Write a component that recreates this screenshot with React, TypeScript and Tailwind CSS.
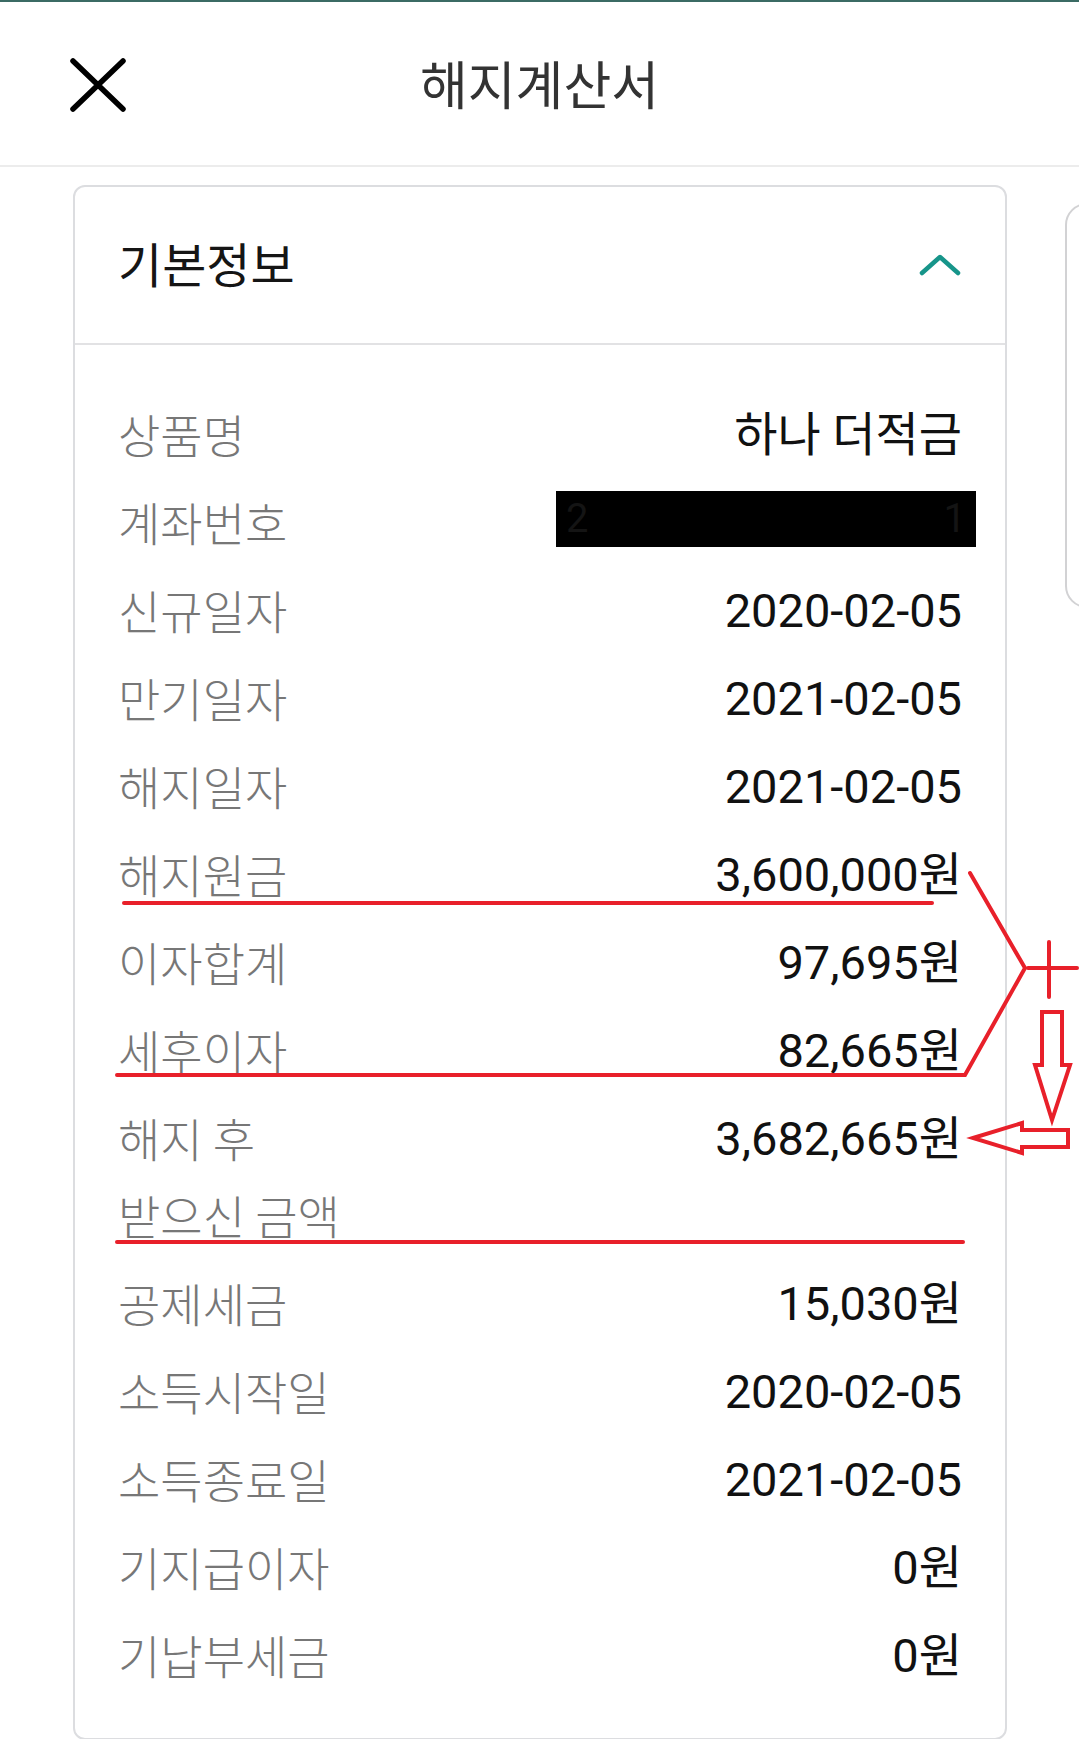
import React from 'react'

const KR = "font-['Noto_Sans_CJK_KR','Noto_Sans',sans-serif]"
const NUM = "font-['Roboto','Noto_Sans_CJK_KR',sans-serif]"

type Row = { label: string[]; value: string | null }

const rows: Row[] = [
  { label: ['상품명'], value: '하나 더적금' },
  { label: ['계좌번호'], value: null },
  { label: ['신규일자'], value: '2020-02-05' },
  { label: ['만기일자'], value: '2021-02-05' },
  { label: ['해지일자'], value: '2021-02-05' },
  { label: ['해지원금'], value: '3,600,000원' },
  { label: ['이자합계'], value: '97,695원' },
  { label: ['세후이자'], value: '82,665원' },
  { label: ['해지 후', '받으신 금액'], value: '3,682,665원' },
  { label: ['공제세금'], value: '15,030원' },
  { label: ['소득시작일'], value: '2020-02-05' },
  { label: ['소득종료일'], value: '2021-02-05' },
  { label: ['기지급이자'], value: '0원' },
  { label: ['기납부세금'], value: '0원' },
]

function CloseIcon() {
  return (
    <svg width="56" height="56" viewBox="0 0 56 56" className="block">
      <path d="M3 4 L53 52 M53 4 L3 52" stroke="#000" strokeWidth="5.5" strokeLinecap="round" fill="none" />
    </svg>
  )
}

function Chevron() {
  return (
    <svg width="44" height="24" viewBox="0 0 44 24" className="block">
      <polyline points="4,20 22,4 40,20" stroke="#17958a" strokeWidth="4.5" strokeLinecap="round" strokeLinejoin="round" fill="none" />
    </svg>
  )
}

// red hand-drawn marks that sit on top of the screenshot
function Annotations() {
  const red = '#e8202a'
  return (
    <svg className="absolute left-0 top-0 pointer-events-none" width="1079" height="1739" viewBox="0 0 1079 1739">
      <g stroke={red} strokeWidth="4" fill="none" strokeLinecap="round" strokeLinejoin="miter">
        <line x1="124" y1="903" x2="932" y2="903" />
        <polyline points="117,1075 965,1075 1025,968 970,873" />
        <line x1="1028" y1="968" x2="1077" y2="968" />
        <line x1="1049" y1="942" x2="1049" y2="997" />
        <polygon points="1042,1012 1062,1012 1062,1065 1070,1065 1052,1120 1035,1065 1042,1065" />
        <polygon points="973,1138 1022,1123 1022,1130 1068,1130 1068,1147 1022,1147 1022,1153" />
        <line x1="117" y1="1242" x2="963" y2="1242" />
      </g>
    </svg>
  )
}

export default function App() {
  return (
    <div className="relative w-[1079px] h-[1739px] overflow-hidden bg-white">
      <div className="h-[2px] bg-[#3b6b64]" />
      <header className="grid grid-cols-[1fr_auto_1fr] items-center h-[165px] border-b-2 border-[#ececec]">
        <div className="pl-[70px] pt-[2px]">
          <CloseIcon />
        </div>
        <h1 className={`${KR} text-[52px] leading-none text-[#333] -mt-[2px]`}>해지계산서</h1>
        <div />
      </header>

      <div className="flex items-start gap-[58px] pl-[73px] pt-[18px]">
        <section className="w-[934px] shrink-0 rounded-[12px] border-2 border-[#dcdde0]">
          <div className="flex items-center justify-between h-[158px] pl-[43px] pr-[43px] border-b-2 border-[#e2e2e4]">
            <h2 className={`${KR} text-[48px] leading-none text-[#151515] -mt-[6px]`}>기본정보</h2>
            <Chevron />
          </div>

          <div className="pt-[44px] pb-[40px] pl-[43px] pr-[43px]">
            {rows.map((row, i) => (
              <div key={i} className="flex items-start justify-between py-[5.5px]">
                <div className={`${KR} font-light text-[46px] leading-[77px] text-[#777]`}>
                  {row.label.map((l, j) => (
                    <div key={j}>{l}</div>
                  ))}
                </div>
                {row.value === null ? (
                  <div className="mt-[8px] -mr-[14px] w-[420px] h-[56px] bg-black flex items-center justify-between px-[10px]">
                    <span className={`${NUM} text-[40px] text-[#141414]`}>2</span>
                    <span className={`${NUM} text-[40px] text-[#141414]`}>1</span>
                  </div>
                ) : (
                  <div className={`${NUM} text-[47px] leading-[77px] text-[#111] whitespace-nowrap translate-y-[1px]`}>{row.value}</div>
                )}
              </div>
            ))}
          </div>
        </section>

        <div className="w-[300px] shrink-0 h-[405px] mt-[18px] rounded-[22px] border-2 border-[#d2d2d4]" />
      </div>

      <Annotations />
    </div>
  )
}
